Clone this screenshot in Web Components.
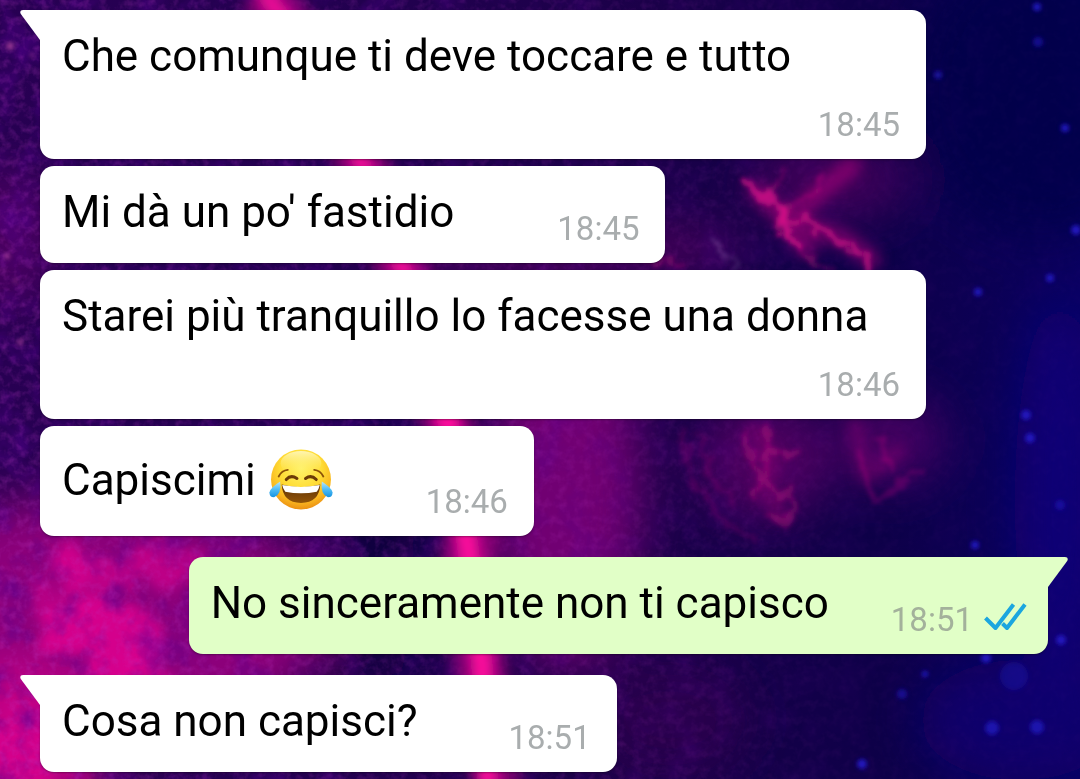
<!DOCTYPE html>
<html lang="it">
<head>
<meta charset="utf-8">
<meta name="viewport" content="width=device-width, initial-scale=1">
<title>Chat</title>
<style>
  body { margin: 0; font-family: Roboto, "Liberation Sans", sans-serif; color: #000; background: #14004a; }
</style>
</head>
<body>
<chat-thread>
  <chat-message tail time="18:45">Che comunque ti deve toccare e tutto</chat-message>
  <chat-message roomy time="18:45">Mi dà un po' fastidio</chat-message>
  <chat-message time="18:46">Starei più tranquillo lo facesse una donna</chat-message>
  <chat-message time="18:46">Capiscimi <joy-emoji></joy-emoji></chat-message>
  <chat-message tail mine time="18:51">No sinceramente non ti capisco</chat-message>
  <chat-message tail time="18:51">Cosa non capisci?</chat-message>
</chat-thread>

<script>
/* Nebula wallpaper behind the conversation */
class NebulaWallpaper extends HTMLElement {
  constructor() {
    super();
    this.attachShadow({ mode: "open" }).innerHTML = `
<style>
  :host { display: block; overflow: hidden; }
  svg { display: block; width: 100%; height: 100%; }
</style>
<svg viewBox="0 0 1080 779" preserveAspectRatio="xMidYMid slice" aria-hidden="true">
  <defs>
    <linearGradient id="base" x1="0" y1="0" x2="1" y2="0">
      <stop offset="0" stop-color="#280053"/><stop offset=".3" stop-color="#230050"/>
      <stop offset=".6" stop-color="#1b0049"/><stop offset=".82" stop-color="#0e0049"/>
      <stop offset="1" stop-color="#0a0060"/>
    </linearGradient>
    <filter id="b6" x="-50%" y="-50%" width="200%" height="200%"><feGaussianBlur stdDeviation="7"/></filter>
    <filter id="b3" x="-50%" y="-50%" width="200%" height="200%"><feGaussianBlur stdDeviation="2"/></filter>
    <filter id="b20" x="-80%" y="-80%" width="260%" height="260%"><feGaussianBlur stdDeviation="24"/></filter>
    <filter id="cloud" x="-50%" y="-50%" width="200%" height="200%">
      <feTurbulence type="fractalNoise" baseFrequency=".022" numOctaves="4" seed="8" result="n"/>
      <feDisplacementMap in="SourceGraphic" in2="n" scale="90" xChannelSelector="R" yChannelSelector="G"/>
      <feGaussianBlur stdDeviation="6"/>
    </filter>
    <filter id="wisp" x="-50%" y="-50%" width="200%" height="200%">
      <feTurbulence type="fractalNoise" baseFrequency=".06" numOctaves="3" seed="11" result="n"/>
      <feDisplacementMap in="SourceGraphic" in2="n" scale="22" xChannelSelector="R" yChannelSelector="G"/>
      <feGaussianBlur stdDeviation="2"/>
    </filter>
    <filter id="mottle" x="0" y="0" width="100%" height="100%">
      <feTurbulence type="fractalNoise" baseFrequency=".03" numOctaves="4" seed="3"/>
      <feColorMatrix values="0 0 0 0 .09  0 0 0 0 0  0 0 0 0 .28  2.2 0 0 0 -.95"/>
    </filter>
    <filter id="grain" x="0" y="0" width="100%" height="100%">
      <feTurbulence type="fractalNoise" baseFrequency=".12" numOctaves="3" seed="5"/>
      <feColorMatrix values="0 0 0 0 .5  0 0 0 0 .04  0 0 0 0 .56  1.4 0 0 0 -.6"/>
    </filter>
    <linearGradient id="fade" x1="0" y1="0" x2="1" y2="0">
      <stop offset="0" stop-color="#fff"/><stop offset=".5" stop-color="#999"/><stop offset=".8" stop-color="#222"/><stop offset="1" stop-color="#111"/>
    </linearGradient>
    <mask id="left"><rect width="1080" height="779" fill="url(#fade)"/></mask>
  </defs>
  <rect width="1080" height="779" fill="url(#base)"/>
  <g filter="url(#b20)">
    <ellipse cx="5" cy="240" rx="50" ry="70" fill="#5c0068" opacity=".65"/>
    <ellipse cx="100" cy="620" rx="230" ry="125" fill="#98007f" opacity=".9"/>
    <ellipse cx="20" cy="740" rx="90" ry="80" fill="#c20085"/>
    <ellipse cx="565" cy="490" rx="75" ry="180" fill="#80007a" opacity=".85"/>
    <ellipse cx="560" cy="250" rx="190" ry="24" fill="#85006f" opacity=".5"/>
    <ellipse cx="375" cy="550" rx="38" ry="140" fill="#0d003e"/>
    <ellipse cx="360" cy="662" rx="60" ry="14" fill="#0d003e" opacity=".8"/>
    <ellipse cx="765" cy="460" rx="65" ry="60" fill="#5c0066" opacity=".8"/>
    <ellipse cx="890" cy="440" rx="55" ry="45" fill="#520067" opacity=".8"/>
    <ellipse cx="1040" cy="90" rx="130" ry="150" fill="#030047" opacity=".8"/>
    <ellipse cx="1060" cy="500" rx="45" ry="200" fill="#12007c" opacity=".8"/>
    <ellipse cx="1020" cy="720" rx="100" ry="60" fill="#120072" opacity=".8"/>
    <ellipse cx="670" cy="720" rx="80" ry="60" fill="#33004f" opacity=".6"/>
    <ellipse cx="830" cy="180" rx="80" ry="40" fill="#550060" opacity=".7"/>
  </g>
  <g filter="url(#cloud)" fill="#e0008f">
    <ellipse cx="100" cy="640" rx="62" ry="42" opacity=".85"/>
    <ellipse cx="120" cy="570" rx="80" ry="22" opacity=".6"/>
    <ellipse cx="40" cy="745" rx="50" ry="40" opacity=".6"/>
    <ellipse cx="60" cy="590" rx="24" ry="40" opacity=".5"/>
    <ellipse cx="140" cy="690" rx="34" ry="40" opacity=".7"/>
  </g>
  <g mask="url(#left)">
    <rect width="1080" height="779" filter="url(#mottle)" opacity=".6"/>
    <rect width="1080" height="779" filter="url(#grain)" opacity=".45"/>
  </g>
  <path d="M262-10Q330 80 362 164T402 267T446 421T470 548T480 666T490 790" fill="none" stroke="#a8007f" stroke-width="52" opacity=".65" filter="url(#b6)"/>
  <path d="M262-10Q330 80 362 164T402 267T446 421" fill="none" stroke="#f4089a" stroke-width="18" filter="url(#b6)"/>
  <path d="M446 400L448 421L468 548L482 666L488 790" fill="none" stroke="#ff089d" stroke-width="22" filter="url(#b6)"/>
  <g fill="none" stroke-linecap="round" stroke-linejoin="round">
    <g filter="url(#b6)" stroke="#c80084">
      <path d="M756 190L789 223L795 236L808 250M789 220L822 190L852 166M800 224L846 240L872 260" stroke-width="18" opacity=".5"/>
      <path d="M754 430L772 463L762 490L782 515M855 425L866 477L898 452" stroke-width="16" opacity=".27"/>
    </g>
    <g filter="url(#wisp)" stroke="#dd138a">
      <path d="M744 178L760 195L782 212Q783 232 798 246" stroke-width="8" opacity=".7"/>
      <path d="M785 215Q810 227 834 237L857 250L870 268" stroke-width="7" opacity=".6"/>
      <path d="M765 195L784 168M816 266L836 272M790 210L825 180M650 260L682 266M780 225L812 262" stroke-width="4" opacity=".35"/>
      <path d="M710 240L738 267" stroke="#a777bc" stroke-width="2" opacity=".45"/>
      <path d="M684 430Q682 490 728 523L754 543M700 435Q700 470 735 505" stroke-width="6" opacity=".17"/>
      <path d="M744 437L758 476L756 500M788 489Q793 507 783 522L766 513M760 455L799 453M768 430L765 480L785 500" stroke-width="6" opacity=".33"/>
      <path d="M855 453Q866 485 877 499L891 488L924 472M880 440L890 470" stroke-width="6" opacity=".25"/>
    </g>
  </g>
  <g fill="#2117bd" filter="url(#b3)">
    <circle cx="1037" cy="7" r="4"/><circle cx="1038" cy="42" r="5" opacity=".6"/><circle cx="938" cy="75" r="4" opacity=".7"/>
    <circle cx="1065" cy="128" r="4"/><circle cx="1076" cy="230" r="5"/><circle cx="978" cy="292" r="4"/><circle cx="1050" cy="278" r="4"/>
    <circle cx="1026" cy="415" r="5"/><circle cx="1030" cy="438" r="5"/><circle cx="975" cy="545" r="4"/><circle cx="1060" cy="505" r="5" opacity=".6"/>
    <circle cx="986" cy="658" r="5"/><circle cx="1061" cy="640" r="5"/><circle cx="1014" cy="676" r="14" opacity=".35"/><circle cx="992" cy="728" r="7" opacity=".8"/>
    <circle cx="1037" cy="727" r="7" opacity=".8"/><circle cx="862" cy="764" r="5"/><circle cx="902" cy="694" r="5" opacity=".6"/><circle cx="925" cy="674" r="3"/>
  </g>
  <g fill="#b5489e" filter="url(#b3)" opacity=".7">
    <circle cx="10" cy="46" r="4"/><circle cx="7" cy="256" r="3"/><circle cx="20" cy="342" r="3"/><circle cx="15" cy="281" r="2"/><circle cx="32" cy="55" r="2"/>
  </g>
</svg>`;
  }
}
customElements.define("nebula-wallpaper", NebulaWallpaper);

/* Face with tears of joy, sized against the message text */
class JoyEmoji extends HTMLElement {
  constructor() {
    super();
    this.attachShadow({ mode: "open" }).innerHTML = `
<style>
  :host { display: inline-block; width: 68px; height: 65px; vertical-align: -16px; }
  svg { display: block; width: 100%; height: 100%; }
</style>
<svg viewBox="0 0 64 64" role="img" aria-label="faccina che ride con le lacrime">
  <defs>
    <radialGradient id="f" cx=".5" cy=".32" r=".7">
      <stop offset="0" stop-color="#fff36a"/><stop offset=".5" stop-color="#ffdc35"/>
      <stop offset=".8" stop-color="#f9b51f"/><stop offset="1" stop-color="#e98a12"/>
    </radialGradient>
    <linearGradient id="h" x1="0" y1="0" x2="0" y2="1"><stop offset="0" stop-color="#fffbd0"/><stop offset="1" stop-color="#ffe84a" stop-opacity="0"/></linearGradient>
    <linearGradient id="m" x1="0" y1="0" x2="0" y2="1"><stop offset="0" stop-color="#5e3206"/><stop offset="1" stop-color="#925407"/></linearGradient>
    <linearGradient id="t" x1="0" y1="0" x2="0" y2="1"><stop offset="0" stop-color="#b8e6fb"/><stop offset=".5" stop-color="#50bdf4"/><stop offset="1" stop-color="#1492e2"/></linearGradient>
  </defs>
  <circle cx="32" cy="33" r="29.5" fill="url(#f)"/>
  <ellipse cx="32" cy="17" rx="20" ry="12" fill="url(#h)" opacity=".8"/>
  <path d="M10 30Q13 24 19 23.500M54 30Q51 24 45 23.500" fill="none" stroke="#8c5208" stroke-width="1.800" stroke-linecap="round"/>
  <path d="M17.500 33Q22 28 28 32M36.500 32Q42 28 47 33" fill="none" stroke="#6c3b06" stroke-width="3" stroke-linecap="round"/>
  <path d="M13 38Q32 43 51 38Q50 56 32 56T13 38Z" fill="url(#m)"/>
  <path d="M13.500 38.500Q32 42 50.500 38.500Q49.500 43 47.500 45Q32 48 16.500 45Q14 42 13.500 38.500Z" fill="#fff"/>
  <path d="M11.500 35Q13 48 5.500 50.500Q.5 50.500 1 45.500Q2 41 11.500 35Z" fill="url(#t)"/>
  <path d="M52.500 35Q51 48 58.500 50.500Q63.500 50.500 63 45.500Q62 41 52.500 35Z" fill="url(#t)"/>
</svg>`;
  }
}
customElements.define("joy-emoji", JoyEmoji);

/* Blue double tick: message read */
class ReadTicks extends HTMLElement {
  constructor() {
    super();
    this.attachShadow({ mode: "open" }).innerHTML = `
<style>
  :host { display: block; width: 44px; height: 32px; }
  svg { display: block; }
</style>
<svg width="44" height="32" viewBox="0 0 44 32" role="img" aria-label="Letto" fill="none" stroke="#1ba6df" stroke-width="4" stroke-linejoin="round">
  <path d="M2.500 18L12.500 28L30.500 4.500"/>
  <path d="M19.500 23.500L24 28L42 4.500"/>
</svg>`;
  }
}
customElements.define("read-ticks", ReadTicks);

/* One speech bubble; attributes: time, tail, mine, roomy (wider gap before the time) */
class ChatMessage extends HTMLElement {
  constructor() {
    super();
    this.attachShadow({ mode: "open" });
  }
  connectedCallback() {
    const mine = this.hasAttribute("mine");
    const tail = this.hasAttribute("tail");
    this.setAttribute("role", "listitem");
    this.shadowRoot.innerHTML = `
<style>
  :host {
    --fill: #fff; --muted: #a9adae;
    position: relative; box-sizing: border-box; align-self: flex-start;
    display: flex; flex-wrap: wrap; align-items: flex-end; column-gap: 91px;
    max-width: calc(100% - 122px); padding: 20px 26px 15px 22px;
    border-radius: 14px; background: var(--fill);
    box-shadow: 0 1px 2px rgba(0, 0, 0, .35);
  }
  :host([roomy]) { column-gap: 103px; }
  :host([tail]) { border-top-left-radius: 0; }
  :host([mine]) {
    --fill: #e1ffc7; --muted: #a3b19b;
    align-self: flex-end; column-gap: 62px; padding-right: 21px; border-radius: 14px 0 14px 14px;
  }
  p { margin: 0 0 10px; font-size: 44px; line-height: 52px; }
  .meta { display: flex; align-items: flex-start; gap: 10px; margin-left: auto; padding-top: 13px; }
  time { font-size: 33px; line-height: 39px; color: var(--muted); }
  .tail { position: absolute; top: 0; right: 100%; fill: var(--fill); }
  :host([mine]) .tail { right: auto; left: 100%; transform: scaleX(-1); }
</style>
${tail ? '<svg class="tail" width="20" height="30" viewBox="0 0 20 30" aria-hidden="true"><path d="M20 0H3Q-1 0 .8 4L20 30Z"/></svg>' : ""}
<p><slot></slot></p>
<span class="meta"><time>${this.getAttribute("time")}</time>${mine ? "<read-ticks></read-ticks>" : ""}</span>`;
  }
}
customElements.define("chat-message", ChatMessage);

class ChatThread extends HTMLElement {
  constructor() {
    super();
    this.attachShadow({ mode: "open" }).innerHTML = `
<style>
  :host { position: relative; display: block; min-height: 100vh; overflow: hidden; }
  nebula-wallpaper { position: absolute; inset: 0; }
  .list { position: relative; display: flex; flex-direction: column; gap: 7px; padding: 10px 32px 6px 40px; }
  ::slotted([tail]:not(:first-child)) { margin-top: 14px; }
</style>
<nebula-wallpaper></nebula-wallpaper>
<div class="list" role="list"><slot></slot></div>`;
  }
}
customElements.define("chat-thread", ChatThread);
</script>
</body>
</html>
